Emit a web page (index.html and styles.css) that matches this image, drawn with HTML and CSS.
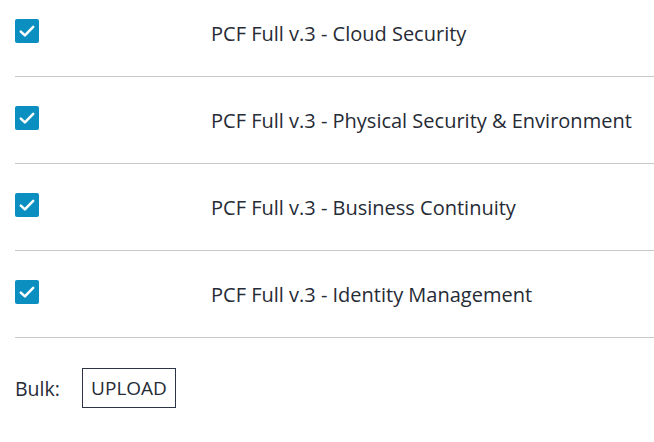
FILE: index.html
```html
<!DOCTYPE html>
<html>
<head>
<meta charset="utf-8">
<link rel="stylesheet" href="styles.css">
</head>
<body>
<div class="page">
  <div class="list">
    <div class="row">
      <span class="check"><svg viewBox="0 0 24 24" width="24" height="24"><path d="M5.8 12.6 L9.9 16.4 L18.2 7.8" fill="none" stroke="#fff" stroke-width="2.5" stroke-linecap="round" stroke-linejoin="round"/></svg></span>
      <span class="label">PCF Full v.3 - Cloud Security</span>
    </div>
    <div class="row">
      <span class="check"><svg viewBox="0 0 24 24" width="24" height="24"><path d="M5.8 12.6 L9.9 16.4 L18.2 7.8" fill="none" stroke="#fff" stroke-width="2.5" stroke-linecap="round" stroke-linejoin="round"/></svg></span>
      <span class="label">PCF Full v.3 - Physical Security &amp; Environment</span>
    </div>
    <div class="row">
      <span class="check"><svg viewBox="0 0 24 24" width="24" height="24"><path d="M5.8 12.6 L9.9 16.4 L18.2 7.8" fill="none" stroke="#fff" stroke-width="2.5" stroke-linecap="round" stroke-linejoin="round"/></svg></span>
      <span class="label">PCF Full v.3 - Business Continuity</span>
    </div>
    <div class="row">
      <span class="check"><svg viewBox="0 0 24 24" width="24" height="24"><path d="M5.8 12.6 L9.9 16.4 L18.2 7.8" fill="none" stroke="#fff" stroke-width="2.5" stroke-linecap="round" stroke-linejoin="round"/></svg></span>
      <span class="label">PCF Full v.3 - Identity Management</span>
    </div>
  </div>
  <div class="bulk">
    <span class="bulk-label">Bulk:</span>
    <button class="upload">UPLOAD</button>
  </div>
</div>
</body>
</html>
```
FILE: styles.css
```css
html, body {
  margin: 0;
  padding: 0;
  background: #fff;
}
body {
  font-family: "Open Sans", "Liberation Sans", sans-serif;
  color: #262b36;
  overflow: hidden;
}
.page {
  padding-left: 15px;
}
.list {
  margin-top: -10px;
}
.row {
  display: flex;
  align-items: center;
  height: 86px;
  border-bottom: 1px solid #c8c8c8;
}
.check {
  width: 24px;
  height: 24px;
  border-radius: 2px;
  background: #0a8fc0;
  display: block;
  margin-bottom: 4px;
  flex: none;
}
.check svg {
  display: block;
}
.label {
  margin-left: 172px;
  margin-top: 2px;
  font-size: 20px;
  line-height: 24px;
  white-space: nowrap;
}
.bulk {
  display: flex;
  align-items: center;
  margin-top: 30px;
  font-size: 19.5px;
}
.bulk-label {
  width: 67px;
}
.upload {
  font-family: inherit;
  font-size: 19px;
  color: #262b36;
  background: #fff;
  border: 1px solid #2d3444;
  height: 40px;
  width: 94px;
  padding: 0;
}
```
